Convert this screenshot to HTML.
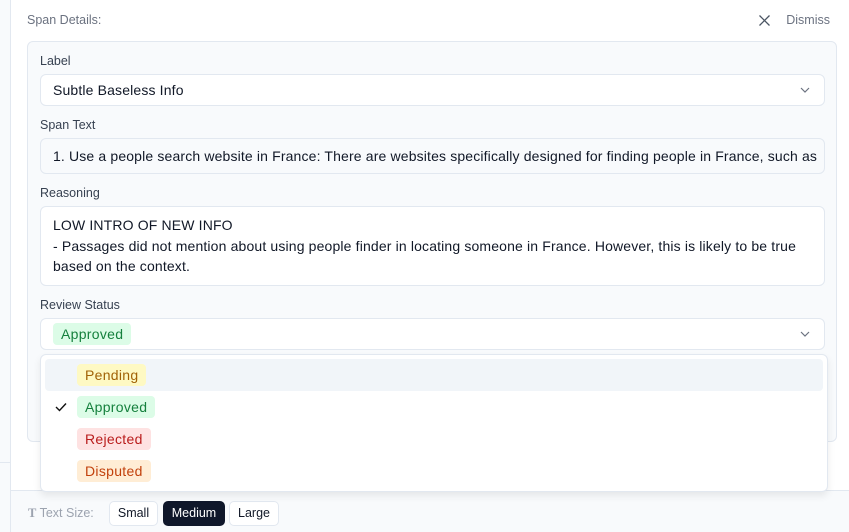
<!DOCTYPE html>
<html><head><meta charset="utf-8"><style>
*{box-sizing:border-box;margin:0;padding:0}
body{width:849px;height:532px;overflow:hidden;font-family:"Liberation Sans",sans-serif;background:#fff;position:relative;color:#111827}
.ls{position:absolute;left:0;top:0;width:11px;height:532px;background:#f8fafc;border-right:1px solid #e2e8f0}
.ls2{position:absolute;left:0;top:462px;width:11px;border-top:1px solid #e2e8f0}
.hdr{position:absolute;left:27px;top:13px;font-size:12.5px;color:#6b7280}
.dis{position:absolute;right:19px;top:13px;font-size:12.5px;color:#6b7280}
.x{position:absolute;left:758px;top:14px}
.card{position:absolute;left:27px;top:41px;width:810px;height:401px;background:#f8fafc;border:1px solid #e2e8f0;border-radius:6px}
.lab{position:absolute;left:40px;font-size:12.5px;color:#374151}
.inp{position:absolute;left:40px;width:785px;background:#fff;border:1px solid #e2e8f0;border-radius:6px;font-size:14px;letter-spacing:0.15px;padding-left:12px;color:#111827}
.chev{position:absolute;right:14px;top:12px}
.badge{display:inline-block;font-size:14px;letter-spacing:0.3px;padding:0 8px;border-radius:4px;line-height:22px}
.g{background:#dcfce7;color:#15803d}.y{background:#fef9c3;color:#a16207}.r{background:#fee2e2;color:#b91c1c}.o{background:#ffedd5;color:#c2410c}
.dd{position:absolute;z-index:2;left:40px;top:354px;width:788px;height:138px;background:#fff;border:1px solid #e2e8f0;border-radius:6px;box-shadow:0 4px 8px rgba(0,0,0,.08)}
.it{position:absolute;left:4px;width:778px;height:32px;border-radius:4px}
.it .badge{position:absolute;left:32px;top:5px}
.bar{position:absolute;left:11px;top:490px;width:838px;height:42px;background:#f8fafc;border-top:1px solid #e2e8f0}
.btn{position:absolute;top:501px;height:25px;border:1px solid #e2e8f0;border-radius:5px;background:#fff;font-size:12.5px;line-height:23px;text-align:center}
</style></head><body>
<div class="ls"></div><div class="ls2"></div>
<div class="hdr">Span Details:</div>
<svg class="x" width="13" height="13" viewBox="0 0 13 13"><path d="M1.5 1.5L11.5 11.5M11.5 1.5L1.5 11.5" stroke="#4b5563" stroke-width="1.3"/></svg>
<div class="dis">Dismiss</div>
<div class="card"></div>
<div class="lab" style="top:54px">Label</div>
<div class="inp" style="top:74px;height:32px;line-height:30px">Subtle Baseless Info<svg class="chev" width="10" height="6" viewBox="0 0 10 6"><path d="M1 1l4 4 4-4" stroke="#6b7280" fill="none" stroke-width="1.2"/></svg></div>
<div class="lab" style="top:118px">Span Text</div>
<div class="inp" style="top:138px;height:36px;line-height:34px;background:#f8fafc;white-space:nowrap;overflow:hidden;padding-right:12px">1. Use a people search website in France: There are websites specifically designed for finding people in France, such as</div>
<div class="lab" style="top:186px">Reasoning</div>
<div class="inp" style="top:206px;height:80px;line-height:20.5px;padding-top:8px;padding-right:16px">LOW INTRO OF NEW INFO<br>- Passages did not mention about using people finder in locating someone in France. However, this is likely to be true based on the context.</div>
<div class="lab" style="top:298px">Review Status</div>
<div class="inp" style="top:318px;height:32px;padding-top:4px"><span class="badge g">Approved</span><svg class="chev" width="10" height="6" viewBox="0 0 10 6"><path d="M1 1l4 4 4-4" stroke="#6b7280" fill="none" stroke-width="1.2"/></svg></div>
<div class="dd">
<div class="it" style="top:4px;background:#f1f5f9"><span class="badge y">Pending</span></div>
<div class="it" style="top:36px"><svg style="position:absolute;left:10px;top:11px" width="12" height="10" viewBox="0 0 12 10"><path d="M1 5l3.5 3.5L11 1.5" stroke="#111" fill="none" stroke-width="1.4"/></svg><span class="badge g">Approved</span></div>
<div class="it" style="top:68px"><span class="badge r">Rejected</span></div>
<div class="it" style="top:100px"><span class="badge o">Disputed</span></div>
</div>
<div class="bar"></div>
<div style="position:absolute;left:28px;top:506px;font-size:12.5px;color:#9ca3af"><b style="font-family:'Liberation Serif',serif">T</b> Text Size:</div>
<div class="btn" style="left:109px;width:49px">Small</div>
<div class="btn" style="left:163px;width:62px;background:#0f172a;border-color:#0f172a;color:#fff">Medium</div>
<div class="btn" style="left:229px;width:50px">Large</div>
</body></html>
